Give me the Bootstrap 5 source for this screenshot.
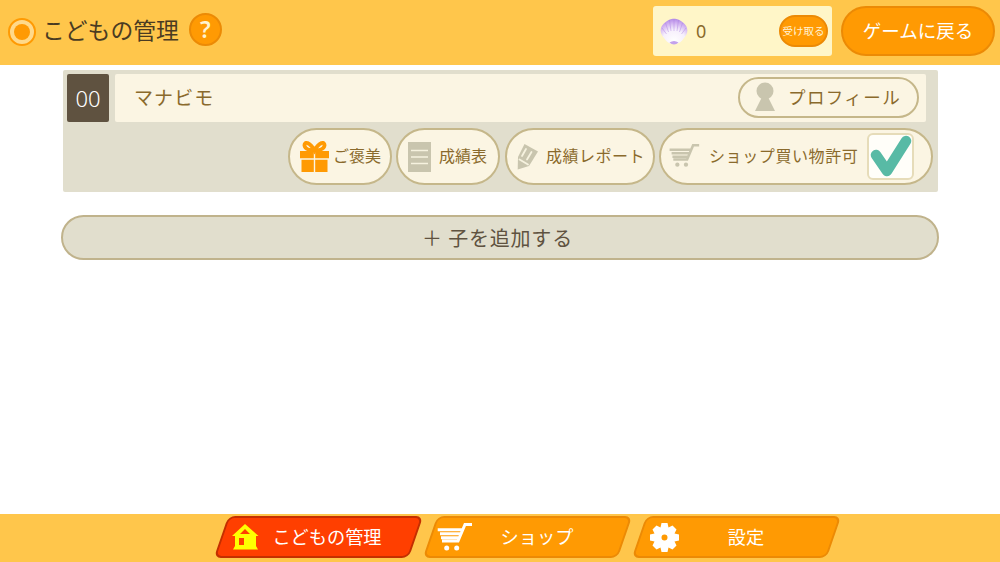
<!DOCTYPE html>
<html lang="ja">
<head>
<meta charset="utf-8">
<title>こどもの管理</title>
<link href="https://cdn.jsdelivr.net/npm/bootstrap@5.3.0/dist/css/bootstrap.min.css" rel="stylesheet">
<style>
html,body{height:562px;overflow:hidden}
body{font-family:"Noto Sans CJK JP","Noto Sans",sans-serif;background:#fff;color:#8a6a2c}
.shell-page{height:562px}
.top-bar{height:65px;background:#ffc64b;padding:6px 5px 9px 8px}
.title-mark{width:28px;height:28px;border-radius:50%;border:2px solid #ff9a03;background:#ffd98a;position:relative;margin-top:1px}
.title-mark::after{content:"";position:absolute;inset:4px;border-radius:50%;background:#ff9a03}
.page-title{font-size:22.800px;line-height:32px;color:#4a3b22;margin:0 10px 3px 6px;font-weight:400}
.help-btn{width:33px;height:33px;border-radius:50%;background:#ff9a03;border:2px solid #ec8a05;color:#fff3d0;font-size:23px;font-weight:600;line-height:1;font-family:"Noto Sans",sans-serif;padding:0;margin-bottom:3px}
.coin-box{width:179px;height:50px;background:#fff6c8;border-radius:3px;padding:0 4px 0 7px}
.coin-num{font-size:18px;color:#8a6a2c;margin-left:8px;font-family:"Noto Sans",sans-serif}
.take-btn{width:49px;height:32px;border-radius:16px;background:#ff9a03;border:2px solid #ec8a05;color:#fff3d6;font-size:10.500px;padding:0;white-space:nowrap;line-height:1}
.back-btn{width:154px;height:50px;border-radius:25px;background:#ff9a03;border:2px solid #ec8a05;color:#fff;font-size:18.500px;padding:0;margin-left:9px}
.kid-panel{width:875px;height:122px;margin:5px 0 0 63px;background:#e1decd;border-radius:2px;padding:4px 12px 0 4px}
.kid-no{width:42px;height:48px;background:#5f5240;color:#fff;font-size:22px;font-weight:300;border-radius:2px;font-family:"Noto Sans",sans-serif}
.kid-name{height:48px;margin-left:6px;background:#fbf5e3;border-radius:2px;padding:0 7px 2px 19px;font-size:19px;letter-spacing:1.100px;color:#8a6a2c}
.profile-btn{width:181px;height:41px;border-radius:21px;border:2px solid #c5b78a;background:#fbf5e3;color:#8a6a2c;font-size:17.500px;letter-spacing:1.400px;padding:0 0 0 14px}
.profile-ico{margin-right:12px}
.action-row{margin-top:6px;margin-right:-7px;height:57px}
.pill-btn{height:57px;border-radius:29px;border:2px solid #c5b78a;background:#fbf5e3;color:#8a6a2c;font-size:16px;padding:0;white-space:nowrap}
.pill-text{margin-bottom:4px}
.pill-a{width:104px;padding-left:10px}
.pill-b{width:104px;padding-left:10px;margin-left:4px}
.pill-c{width:150px;padding-left:8px;margin-left:5px;letter-spacing:.5px}
.pill-d{width:274px;padding-left:8px;margin-left:4px;letter-spacing:.6px}
.pill-ico-c{margin-right:7px}
.pill-ico-d{margin-right:9px}
.check-box{width:47px;height:47px;background:#fffef9;border:2px solid #e6dcb9;border-radius:6px;margin-left:9px}
.add-btn{display:block;width:878px;height:45px;margin:23px 0 0 61px;border-radius:23px;border:2px solid #c0b38c;background:#e1decd;color:#5f5240;font-size:20px;letter-spacing:.800px;padding:0 5px 0 0;line-height:1}
.bottom-bar{height:48px;background:#ffc64b;padding:2px 0 0 54px;margin-top:auto}
.tab-item{width:209px;height:42px;position:relative;background:none;border:0;padding:0;color:#fff;font-size:18.200px}
.tab-item::before{content:"";position:absolute;inset:0 7px 0 7px;background:#ff9a03;border:2px solid #ec8a05;border-radius:7px;transform:skewX(-19deg)}
.tab-item.is-current::before{background:#ff3f00;border-color:#c42f00}
.tab-inner{position:relative;display:flex;align-items:center;height:100%}
.tab-icon{position:absolute;top:0;bottom:0;margin:auto 0}
.ico-home{left:18px}
.ico-cart{left:14px}
.ico-gear{left:18px}
.tab-label{flex:1;text-align:center}
.lab-home{padding-left:18px}
.lab-side{padding-left:20px}
</style>
</head>
<body>
<div class="shell-page d-flex flex-column">
  <header class="top-bar d-flex align-items-center">
    <span class="title-mark"></span>
    <h1 class="page-title">こどもの管理</h1>
    <button class="help-btn btn">?</button>
    <div class="ms-auto d-flex align-items-center">
      <div class="coin-box d-flex align-items-center">
        <svg width="28" height="28" viewBox="0 0 28 28">
          <defs><radialGradient id="shellGrad" gradientUnits="userSpaceOnUse" cx="14" cy="24" r="23"><stop offset="0" stop-color="#fff"/><stop offset=".5" stop-color="#f6effc"/><stop offset=".8" stop-color="#cfaef0"/><stop offset="1" stop-color="#ad84e4"/></radialGradient></defs>
          <path fill="url(#shellGrad)" d="M14 27C9 27 6 24 4 21 1 18 0 14 1 11 2 8 3.500 7 5 5.500 7 4 8 3 10 2.500 11.500 1.500 16.500 1.500 18 2.500 20 3 21 4 23 5.500 24.500 7 26 8 27 11 28 14 27 18 24 21 22 24 19 27 14 27Z"/>
          <g stroke="#a97fe2" stroke-width=".8" stroke-opacity=".55" fill="none">
            <path d="M14 14V2M11 14 9.500 3M17 14 18.500 3M8.500 15 5.500 6M19.500 15 22.500 6M6.500 17 2 11M21.500 17 26 11"/>
          </g>
          <path d="M9.500 25.500Q14 22.500 18.500 25.500 16.500 27.500 14 27.500 11.500 27.500 9.500 25.500Z" fill="#c3a2ec"/>
        </svg>
        <span class="coin-num">0</span>
        <button class="take-btn btn ms-auto">受け取る</button>
      </div>
      <button class="back-btn btn">ゲームに戻る</button>
    </div>
  </header>

  <main>
    <section class="kid-panel">
      <div class="d-flex">
        <div class="kid-no d-flex align-items-center justify-content-center">00</div>
        <div class="kid-name flex-grow-1 d-flex align-items-center justify-content-between">
          <span>マナビモ</span>
          <button class="profile-btn btn d-flex align-items-center">
            <svg width="22" height="30" viewBox="0 0 22 30" class="profile-ico"><circle cx="11" cy="9" r="8.500" fill="#c9c5ae"/><path d="M8 15H14L21 29H1Z" fill="#c9c5ae"/></svg>
            <span>プロフィール</span>
          </button>
        </div>
      </div>
      <div class="action-row d-flex justify-content-end">
        <button class="pill-btn pill-a btn d-flex align-items-center">
          <svg width="29" height="31" viewBox="0 0 29 31" class="me-1"><path d="M14.500 9.500C10 1 4 0 4.500 4.500 5 8.500 11 9.500 14.500 9.500 18 9.500 24 8.500 24.500 4.500 25 0 19 1 14.500 9.500Z" fill="none" stroke="#ff9a03" stroke-width="3.800"/><path d="M0 10H13.800V17.300H0ZM15.200 10H29V17.300H15.200ZM1.500 18.700H13.800V31H1.500ZM15.200 18.700H27.500V31H15.200Z" fill="#ff9a03"/></svg>
          <span class="pill-text">ご褒美</span>
        </button>
        <button class="pill-btn pill-b btn d-flex align-items-center">
          <svg width="23" height="30" viewBox="0 0 23 30" class="me-2"><rect width="23" height="30" fill="#c9c5ae"/><path d="M3 8.500H20M3 15H20M3 21.500H20" stroke="#f6f2df" stroke-width="1.500"/></svg>
          <span class="pill-text">成績表</span>
        </button>
        <button class="pill-btn pill-c btn d-flex align-items-center">
          <svg width="24" height="28" viewBox="0 0 24 28" class="pill-ico-c"><path d="M9.500 1 23 8.500 14 23 2.700 26.500 3 14Z" fill="#c9c5ae"/><path d="M11 6 7 13M16.500 9 12 16.500M4.500 16.500 13 21.500" stroke="#f6f2df" stroke-width="1.800" stroke-linecap="round"/></svg>
          <span class="pill-text">成績レポート</span>
        </button>
        <button class="pill-btn pill-d btn d-flex align-items-center">
          <svg width="31" height="25" viewBox="0 0 36 29" class="pill-ico-d"><path d="M35 1.500H28L21 18H5M.7 6.700H26M3 10.700H25M4 14.700H23" stroke="#c9c5ae" stroke-width="3" fill="none"/><circle cx="9.700" cy="24" r="2.500" fill="#c9c5ae"/><circle cx="19.700" cy="24" r="2.500" fill="#c9c5ae"/></svg>
          <span class="pill-text">ショップ買い物許可</span>
          <span class="check-box d-flex align-items-center justify-content-center">
            <svg width="43" height="43" viewBox="0 0 43 43"><path d="M7 20 18 36 37 6" fill="none" stroke="#58baa5" stroke-width="10.500" stroke-linecap="round" stroke-linejoin="round"/></svg>
          </span>
        </button>
      </div>
    </section>
    <button class="add-btn btn">＋ 子を追加する</button>
  </main>

  <nav class="bottom-bar d-flex justify-content-center">
    <button class="tab-item is-current btn">
      <span class="tab-inner">
        <svg class="tab-icon ico-home" width="27" height="26" viewBox="0 0 27 26"><path fill-rule="evenodd" fill="#ffff00" d="M13 0 26.500 12H24V22L26 25.500H1L3 22V12H0ZM13 5 8 10H18ZM7 14V21H12V14Z"/></svg>
        <span class="tab-label lab-home">こどもの管理</span>
      </span>
    </button>
    <button class="tab-item btn">
      <span class="tab-inner">
        <svg class="tab-icon ico-cart" width="36" height="29" viewBox="0 0 36 29"><path d="M35 1.500H28L21 18H5M.7 6.700H26M3 10.700H25M4 14.700H23" stroke="#fff" stroke-width="3" fill="none"/><circle cx="9.700" cy="25" r="2.500" fill="#fff"/><circle cx="19.700" cy="25" r="2.500" fill="#fff"/></svg>
        <span class="tab-label lab-side">ショップ</span>
      </span>
    </button>
    <button class="tab-item btn">
      <span class="tab-inner">
        <svg class="tab-icon ico-gear" width="29" height="29" viewBox="0 0 29 29"><path fill="#fff" fill-rule="evenodd" d="M11.500 0H17.500L18.500 4.500 22.500 2.500 26.500 6.500 24.500 10.500 29 11.500V17.500L24.500 18.500 26.500 22.500 22.500 26.500 18.500 24.500 17.500 29H11.500L10.500 24.500 6.500 26.500 2.500 22.500 4.500 18.500 0 17.500V11.500L4.500 10.500 2.500 6.500 6.500 2.500 10.500 4.500ZM14.500 11.500A3 3 0 1 0 14.500 17.500 3 3 0 1 0 14.500 11.500Z"/></svg>
        <span class="tab-label lab-side">設定</span>
      </span>
    </button>
  </nav>
</div>
<script src="https://cdn.jsdelivr.net/npm/bootstrap@5.3.0/dist/js/bootstrap.bundle.min.js"></script>
</body>
</html>
